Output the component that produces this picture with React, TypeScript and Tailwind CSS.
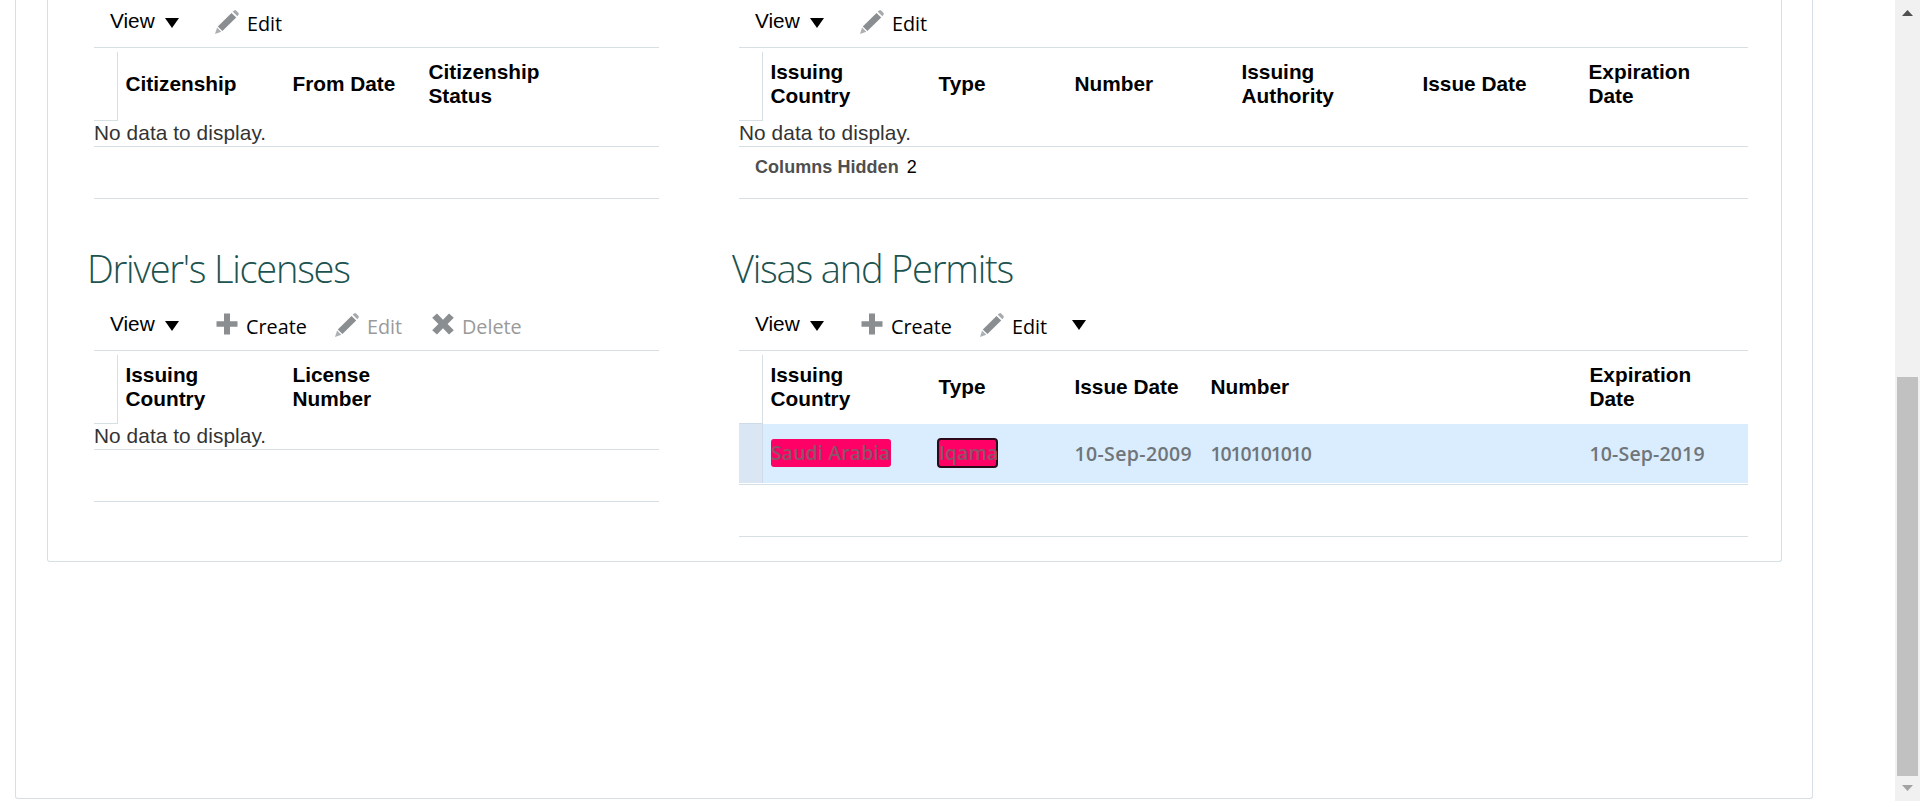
import type { ReactNode } from "react";

const HUMAN = "font-['Open_Sans','Noto_Sans',sans-serif]";

function Pencil() {
  return (
    <svg className="block h-6 w-6 shrink-0" viewBox="0 0 24 24" fill="#8a8e91">
      <path d="M17.6 1.6 19.2.4q1-.7 1.9.2l2.2 2.2q.9.9.2 1.9l-1.2 1.6z" opacity=".75" />
      <path d="M16.5 2.9 21.2 7.5 7.4 21 2.8 16.6z" />
      <path d="M2.1 17.6 6.3 21.8 0 24z" opacity=".7" />
    </svg>
  );
}

function Plus() {
  return (
    <svg className="ml-px block h-[22px] w-[22px] shrink-0" viewBox="0 0 22 22" fill="#8a8e91">
      <path d="M8 .5h6v7.7h7.5v5.6H14v7.7H8v-7.7H.5V8.2H8z" />
    </svg>
  );
}

function Cross() {
  return (
    <svg className="ml-px block h-[22px] w-[22px] shrink-0" viewBox="0 0 22 22" fill="#8a8e91">
      <path d="M5 .5 11 6.8 17 .5l4.8 4.3L15.6 11l6.2 6.2-4.8 4.3-6-6.3-6 6.3L.2 17.2 6.4 11 .2 4.8z" />
    </svg>
  );
}

function Caret() {
  return (
    <svg className="block h-[10px] w-[14px] shrink-0" viewBox="0 0 14 10">
      <path d="M0 0h14L7 10z" fill="#000" />
    </svg>
  );
}

function Action({ icon, label, className }: { icon: ReactNode; label: string; className: string }) {
  return (
    <div className={`flex items-start ${className}`}>
      {icon}
      <span className={`${HUMAN} mt-[1px] text-[19.8px] leading-[25px] font-medium whitespace-nowrap`}>{label}</span>
    </div>
  );
}

function Toolbar({ children }: { children?: ReactNode }) {
  return (
    <div className="flex h-[47px] items-start pt-2.5 pl-4">
      <span className="-mt-px w-[55px] text-[20.8px] leading-6">View</span>
      <div className="mt-2 w-[50px]">
        <Caret />
      </div>
      {children}
    </div>
  );
}

function Header({ widths, labels, selected }: { widths: string[]; labels: string[]; selected?: boolean }) {
  return (
    <div className="flex h-[74px] border-t border-[#d6dfe3] text-[20.8px] leading-6 font-bold">
      <div
        className={`mt-1 h-[69px] w-6 shrink-0 border-r border-b ${selected ? "border-r-[#d6dfe3] border-b-[#cfdbe6]" : "border-[#d6dfe3]"}`}
      />
      {labels.map((label, i) => (
        <div key={label} className={`flex h-[72px] shrink-0 items-center pl-[7.5px] whitespace-pre-line ${widths[i]}`}>
          {label}
        </div>
      ))}
    </div>
  );
}

function Empty() {
  return <div className="h-[25px] text-[20.8px] leading-6 tracking-[0.08px] text-[#333]">No data to display.</div>;
}

function Footer({ children }: { children?: ReactNode }) {
  return <div className="h-[53px] border-y border-[#d6dfe3]">{children}</div>;
}

function Title({ children, className }: { children: ReactNode; className: string }) {
  return (
    <h2 className={`${HUMAN} -ml-[7px] h-[104px] pt-[42px] text-[38px] leading-[54px] font-light whitespace-nowrap text-[#1c5350] ${className}`}>
      {children}
    </h2>
  );
}

export default function App() {
  return (
    <div className="flex h-[801px] w-full overflow-hidden bg-white font-['Liberation_Sans',Arial,sans-serif] text-black">
      <main className="ml-[15px] h-[799px] w-[1798px] rounded-b-[3px] border-x border-b border-[#d6dfe3] pl-[31px]">
        <div className="flex h-[562px] w-[1735px] rounded-b-[3px] border-x border-b border-[#d6dfe3] pl-[46px]">
          <div className="w-[565px]">
            <section>
              <Toolbar>
                <Action icon={<Pencil />} label="Edit" className="gap-2" />
              </Toolbar>
              <Header
                labels={["Citizenship", "From Date", "Citizenship\nStatus"]}
                widths={["w-[167px]", "w-[136px]", "w-[150px]"]}
              />
              <Empty />
              <Footer />
            </section>
            <section>
              <Title className="tracking-[-1.25px]">Driver's Licenses</Title>
              <Toolbar>
                <Action icon={<Plus />} label="Create" className="w-[120px] gap-2" />
                <Action icon={<Pencil />} label="Edit" className="w-[96px] gap-2 [&>span]:text-[#9a9a9a]" />
                <Action icon={<Cross />} label="Delete" className="gap-2 [&>span]:text-[#9a9a9a]" />
              </Toolbar>
              <Header labels={["Issuing\nCountry", "License\nNumber"]} widths={["w-[167px]", "w-[136px]"]} />
              <Empty />
              <Footer />
            </section>
          </div>
          <div className="ml-20 w-[1009px]">
            <section>
              <Toolbar>
                <Action icon={<Pencil />} label="Edit" className="gap-2" />
              </Toolbar>
              <Header
                labels={["Issuing\nCountry", "Type", "Number", "Issuing\nAuthority", "Issue Date", "Expiration\nDate"]}
                widths={["w-[168px]", "w-[136px]", "w-[167px]", "w-[181px]", "w-[166px]", "w-[150px]"]}
              />
              <Empty />
              <Footer>
                <div className="flex gap-2 pt-2 pl-4 text-lg leading-6">
                  <span className="font-bold tracking-[0.05px] text-[#4f4f4f]">Columns Hidden</span>
                  <span>2</span>
                </div>
              </Footer>
            </section>
            <section>
              <Title className="tracking-[-1.2px]">Visas and Permits</Title>
              <Toolbar>
                <Action icon={<Plus />} label="Create" className="w-[120px] gap-2" />
                <Action icon={<Pencil />} label="Edit" className="w-[92px] gap-2" />
                <div className="mt-[7px]">
                  <Caret />
                </div>
              </Toolbar>
              <Header
                selected
                labels={["Issuing\nCountry", "Type", "Issue Date", "Number", "Expiration\nDate"]}
                widths={["w-[168px]", "w-[136px]", "w-[136px]", "w-[379px]", "w-[150px]"]}
              />
              <div
                className={`${HUMAN} mb-px flex h-[59px] items-center bg-[#d9edfe] text-[19.5px] leading-7 font-semibold text-[#707579]`}
              >
                <div className="h-full w-6 shrink-0 border-r border-[#cfdbe6] bg-[#dae6f4]" />
                <div className="-mt-[2px] flex w-[166px] pl-2">
                  <span className="h-7 w-[120px] rounded-[3px] bg-[#ff0066] tracking-[0.05px] whitespace-nowrap text-[#8b5468]">
                    Saudi Arabia
                  </span>
                </div>
                <div className="-mt-[2px] flex w-[138px] pl-2">
                  <span className="h-[30px] w-[61px] rounded-[4px] border-2 border-[#2a0a18] bg-[#ff0066] leading-[26px] text-[#8b5468]">
                    Iqama
                  </span>
                </div>
                <div className="w-[136px] pl-[7.5px] tracking-[0.35px] whitespace-nowrap">10-Sep-2009</div>
                <div className="w-[379px] pl-[7.5px] tracking-[-1.12px]">1010101010</div>
                <div className="pl-[7.5px] tracking-[0.15px] whitespace-nowrap">10-Sep-2019</div>
              </div>
              <Footer />
            </section>
          </div>
        </div>
      </main>
      <aside className="ml-auto flex h-full w-[25px] flex-col items-center bg-[#f1f1f1]">
        <svg className="mt-[10px] h-[6px] w-[11px]" viewBox="0 0 11 6">
          <path d="M0 6 5.5 0 11 6z" fill="#505050" />
        </svg>
        <div className="mt-[361px] h-[399px] w-[21px] shrink-0 bg-[#c1c1c1]" />
        <svg className="mt-[9px] h-[6px] w-[11px]" viewBox="0 0 11 6">
          <path d="M0 0h11L5.5 6z" fill="#a3a3a3" />
        </svg>
      </aside>
    </div>
  );
}
